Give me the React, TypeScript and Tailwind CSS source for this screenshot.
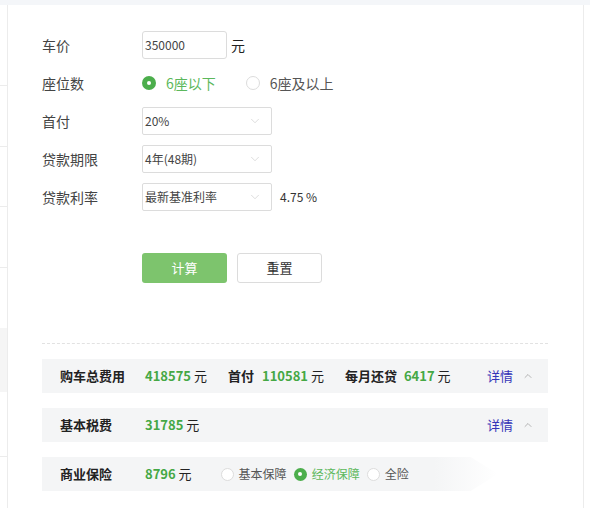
import { ChevronDown, ChevronUp } from 'lucide-react';

const font = "font-['Microsoft_YaHei','Noto_Sans_CJK_SC',sans-serif]";

function Radio({ checked, label, small }: { checked?: boolean; label: string; small?: boolean }) {
  return (
    <label className={`flex items-center ${small ? 'gap-[5px] text-[12px]' : 'gap-[10px] text-[14px]'} ${checked ? 'text-[#5cb85c]' : 'text-[#555]'}`}>
      <span className={`flex items-center justify-center rounded-full ${small ? 'w-[13px] h-[13px]' : 'w-[14px] h-[14px]'} ${checked ? 'bg-[#4cae4c]' : 'border border-[#dcdcdc] bg-white'}`}>
        {checked && <span className="w-[4px] h-[4px] rounded-full bg-white" />}
      </span>
      {label}
    </label>
  );
}

function Select({ value }: { value: string }) {
  return (
    <div className="w-[130px] h-[28px] border border-[#dcdcdc] rounded-[2px] flex items-center justify-between pl-[2px] pr-[9px] text-[12px] text-[#444] bg-white">
      <span>{value}</span>
      <ChevronDown className="w-[14px] h-[14px] text-[#c4c4c4]" strokeWidth={1} />
    </div>
  );
}

function Row({ label, children }: { label: string; children: React.ReactNode }) {
  return (
    <div className="h-[38px] flex items-center">
      <div className="w-[100px] text-[14px] text-[#444]">{label}</div>
      {children}
    </div>
  );
}

function Num({ v }: { v: string }) {
  return (
    <span className="text-[13px] text-[#222]">
      <span className="font-bold text-[#45a845]">{v}</span> 元
    </span>
  );
}

function Detail() {
  return (
    <div className="ml-auto flex items-center gap-[9px] text-[13px] text-[#3434b8]">
      详情
      <ChevronUp className="w-[12px] h-[12px] text-[#888]" strokeWidth={1.2} />
    </div>
  );
}

export default function App() {
  return (
    <div className={`h-[508px] bg-white flex flex-col overflow-hidden ${font}`}>
      <div className="h-[5px] bg-[#f4f6f9] shrink-0" />
      <div className="flex flex-1">
        <div className="w-[8px] border-r border-[#ececec] flex flex-col">
          <div className="h-[81px] border-b border-[#ececec]" />
          <div className="h-[61px] border-b border-[#ececec]" />
          <div className="h-[60px] border-b border-[#ececec]" />
          <div className="h-[61px] border-b border-[#ececec]" />
          <div className="h-[60px]" />
          <div className="h-[64px] bg-[#f5f5f5]" />
          <div className="h-[65px] border-b border-[#ececec]" />
        </div>
        <div className="w-[576px] border-r border-[#ececec] pl-[34px] pr-[35px] pt-[21px]">
          <Row label="车价">
            <div className="w-[85px] h-[28px] border border-[#dcdcdc] rounded-[3px] flex items-center px-[2px] text-[12px] text-[#444]">350000</div>
            <span className="ml-[4px] text-[14px] text-[#222]">元</span>
          </Row>
          <Row label="座位数">
            <div className="flex items-center gap-[30px]">
              <Radio checked label="6座以下" />
              <Radio label="6座及以上" />
            </div>
          </Row>
          <Row label="首付">
            <Select value="20%" />
          </Row>
          <Row label="贷款期限">
            <Select value="4年(48期)" />
          </Row>
          <Row label="贷款利率">
            <Select value="最新基准利率" />
            <span className="ml-[8px] text-[12px] text-[#333]">4.75 %</span>
          </Row>

          <div className="flex gap-[10px] mt-[37px] ml-[100px]">
            <button className="w-[85px] h-[30px] rounded-[3px] bg-[#7dc46d] text-white text-[13px]">计算</button>
            <button className="w-[85px] h-[30px] rounded-[3px] border border-[#dcdcdc] bg-white text-[#333] text-[13px]">重置</button>
          </div>

          <div className="mt-[60px] border-t border-dashed border-[#e2e2e2]" />

          <div className="mt-[15px] h-[34px] bg-[#f4f5f6] flex items-center pl-[18px] pr-[14px]">
            <span className="w-[85px] text-[13px] font-bold text-[#222]">购车总费用</span>
            <Num v="418575" />
            <span className="ml-[21px] mr-[8px] text-[13px] font-bold text-[#222]">首付</span>
            <Num v="110581" />
            <span className="ml-[21px] mr-[7px] text-[13px] font-bold text-[#222]">每月还贷</span>
            <Num v="6417" />
            <Detail />
          </div>

          <div className="mt-[15px] h-[34px] bg-[#f4f5f6] flex items-center pl-[18px] pr-[14px]">
            <span className="w-[85px] text-[13px] font-bold text-[#222]">基本税费</span>
            <Num v="31785" />
            <Detail />
          </div>

          <div className="mt-[15px] h-[34px] w-[456px] flex items-center pl-[18px] bg-[linear-gradient(to_right,#f4f5f6_86%,rgba(244,245,246,0))] [clip-path:polygon(0_0,94%_0,100%_50%,94%_100%,0_100%)]">
            <span className="w-[85px] text-[13px] font-bold text-[#222]">商业保险</span>
            <Num v="8796" />
            <div className="ml-[29px] flex items-center gap-[7px]">
              <Radio small label="基本保障" />
              <Radio small checked label="经济保障" />
              <Radio small label="全险" />
            </div>
          </div>
        </div>
      </div>
    </div>
  );
}
